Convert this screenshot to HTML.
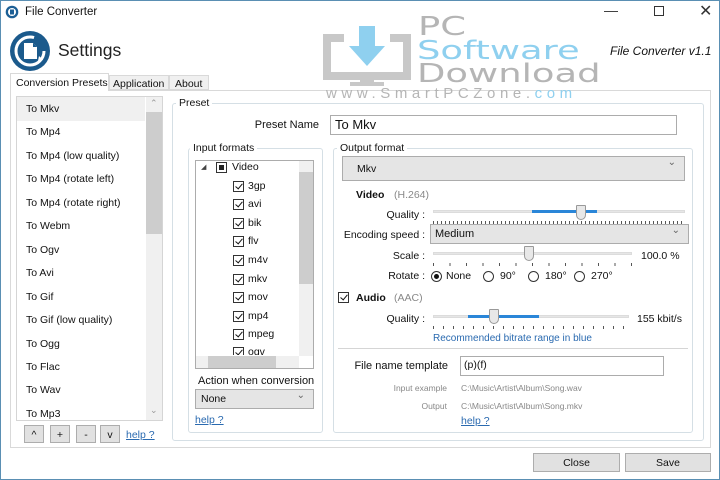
<!DOCTYPE html>
<html><head><meta charset="utf-8">
<style>
*{box-sizing:border-box;margin:0;padding:0}
body{width:720px;height:480px;overflow:hidden;background:#fff;font-family:"Liberation Sans",sans-serif;font-size:10.5px;color:#111;position:relative}
.a{position:absolute;white-space:nowrap}
.r{text-align:right}
.box{position:absolute;border:1px solid #d5dfe5;border-radius:3px}
.cb{position:absolute;width:11px;height:11px;border:1px solid #333;background:#fff}
.cb:after{content:"";position:absolute;left:3px;top:0px;width:3px;height:6px;border:solid #111;border-width:0 1.6px 1.6px 0;transform:rotate(40deg)}
.combo{position:absolute;background:#e5e5e5;border:1px solid #acacac}
.combo:after{content:"⌄";position:absolute;right:8px;top:0px;font-size:10px;color:#666}
.btn{position:absolute;background:#e1e1e1;border:1px solid #adadad;text-align:center}
.link{color:#2a6ab0;text-decoration:underline}
.track{position:absolute;height:3px;background:#e6e6e6;border:1px solid #dcdcdc}
.blue{position:absolute;height:3px;background:#2a86d8}
.thumb{position:absolute;width:10px;height:15px;background:#e8e8e8;border:1px solid #999;border-radius:1px 1px 5px 5px}
.ticks{position:absolute;height:3px}
.rad{position:absolute;width:11px;height:11px;border:1px solid #333;border-radius:50%;background:#fff}
.grey{color:#888}
.input{position:absolute;border:1px solid #acacac;background:#fff}
.wm{position:absolute;white-space:nowrap;font-family:"DejaVu Sans",sans-serif;font-size:26px;line-height:24px;transform-origin:0 0;transform:scaleX(1.42)}
</style></head><body>
<div class="a" style="left:0;top:0;width:720px;height:480px;border:1px solid #5a8fb3"></div>
<svg class="a" style="left:5px;top:5px" width="14" height="14" viewBox="0 0 14 14"><circle cx="7" cy="7" r="6.3" fill="#1c5f95"/><circle cx="7" cy="7" r="4" fill="#fff"/><rect x="5" y="4.5" width="4" height="5" fill="#1c5f95"/></svg>
<div class="a" style="left:25px;top:6px;font-size:11.5px">File Converter</div>
<div class="a" style="left:604px;top:2px;font-size:14px;color:#333">&#8212;</div>
<div class="a" style="left:654px;top:6px;width:10px;height:10px;border:1px solid #333"></div>
<div class="a" style="left:699px;top:1px;font-size:16px;color:#333">&#10005;</div>
<svg class="a" style="left:9px;top:30px" width="42" height="42" viewBox="0 0 42 42"><circle cx="21" cy="21" r="20" fill="#1b5a8c"/><circle cx="21" cy="21" r="14" fill="none" stroke="#fff" stroke-width="3" stroke-dasharray="70 18"/><path d="M15 13h9l4 4v12h-13z" fill="#fff"/><path d="M24 13v4h4" fill="#1b5a8c"/><path d="M30 26l4 4-5 1z" fill="#fff"/></svg>
<div class="a" style="left:58px;top:40px;font-size:17.5px;color:#222">Settings</div>
<div class="a" style="left:10px;top:90px;width:701px;height:358px;border:1px solid #d9d9d9;background:#fff"></div>
<div class="a" style="left:10px;top:73px;width:99px;height:18px;border:1px solid #d9d9d9;border-bottom:none;background:#fff;padding:3px 0 0 5px">Conversion Presets</div>
<div class="a" style="left:109px;top:75px;width:60px;height:15px;border:1px solid #d9d9d9;background:#f0f0f0;padding:2px 0 0 3px">Application</div>
<div class="a" style="left:169px;top:75px;width:40px;height:15px;border:1px solid #d9d9d9;background:#f0f0f0;padding:2px 0 0 5px">About</div>
<svg class="a" style="left:322px;top:26px" width="92" height="60" viewBox="0 0 92 60"><rect x="5" y="12" width="80" height="38" fill="none" stroke="#c8c8c8" stroke-width="8"/><rect x="22" y="4" width="46" height="40" fill="#fff"/><rect x="37" y="0" width="16" height="22" fill="#8fd0ef"/><path d="M27 20h36l-18 20z" fill="#8fd0ef"/><rect x="38" y="50" width="14" height="6" fill="#c8c8c8"/><rect x="28" y="56" width="34" height="4" fill="#c8c8c8"/></svg>
<div class="wm" style="left:418px;top:15px;color:#b5b5b5">PC</div>
<div class="wm" style="left:417px;top:39px;color:#8fd0ef">Software</div>
<div class="wm" style="left:417px;top:62px;color:#b5b5b5">Download</div>
<div class="a" style="left:326px;top:85px;font-size:15px;letter-spacing:4.6px;color:#b5b5b5">www.SmartPCZone.<span style="color:#8fd0ef">com</span></div>
<div class="a" style="left:610px;top:44px;font-size:12px;font-style:italic">File Converter v1.1</div>
<div class="a" style="left:16px;top:96px;width:147px;height:325px;border:1px solid #d5d5d5;background:#fff"></div>
<div class="a" style="left:17px;top:97px;width:128px;height:24px;background:#f0f0f0"></div>
<div class="a" style="left:146px;top:97px;width:16px;height:323px;background:#f0f0f0"></div>
<div class="a" style="left:146px;top:112px;width:16px;height:122px;background:#cdcdcd"></div>
<div class="a" style="left:150px;top:98px;color:#999;font-size:9px">&#8963;</div>
<div class="a" style="left:150px;top:405px;color:#999;font-size:9px">&#8964;</div>
<div class="a" style="left:26px;top:98px;line-height:23.45px">To Mkv<br>To Mp4<br>To Mp4 (low quality)<br>To Mp4 (rotate left)<br>To Mp4 (rotate right)<br>To Webm<br>To Ogv<br>To Avi<br>To Gif<br>To Gif (low quality)<br>To Ogg<br>To Flac<br>To Wav<br>To Mp3</div>
<div class="btn" style="left:24px;top:425px;width:20px;height:18px;padding-top:3px">^</div>
<div class="btn" style="left:50px;top:425px;width:20px;height:18px;padding-top:3px">+</div>
<div class="btn" style="left:76px;top:425px;width:20px;height:18px;padding-top:3px">-</div>
<div class="btn" style="left:100px;top:425px;width:20px;height:18px;padding-top:3px">v</div>
<div class="a link" style="left:126px;top:429px">help ?</div>
<div class="box" style="left:172px;top:103px;width:532px;height:338px"></div>
<div class="a" style="left:176px;top:97px;background:#fff;padding:0 3px">Preset</div>
<div class="a r" style="left:240px;top:119px;width:79px;font-size:11px">Preset Name</div>
<div class="input" style="left:330px;top:115px;width:347px;height:20px;font-size:13px;padding:1px 4px">To Mkv</div>
<div class="box" style="left:188px;top:148px;width:135px;height:285px"></div>
<div class="a" style="left:190px;top:142px;background:#fff;padding:0 3px">Input formats</div>
<div class="a" style="left:195px;top:160px;width:119px;height:209px;border:1px solid #acacac"></div>
<div class="a" style="left:299px;top:161px;width:14px;height:195px;background:#f0f0f0"></div>
<div class="a" style="left:299px;top:172px;width:14px;height:112px;background:#cdcdcd"></div>
<div class="a" style="left:196px;top:356px;width:103px;height:12px;background:#f0f0f0"></div>
<div class="a" style="left:208px;top:356px;width:68px;height:12px;background:#cdcdcd"></div>
<div class="a" style="left:201px;top:163px;font-size:7px;color:#444">&#9698;</div>
<div class="a" style="left:216px;top:162px;width:11px;height:11px;border:1px solid #333"><div style="margin:2px;width:5px;height:5px;background:#222"></div></div>
<div class="a" style="left:232px;top:161px">Video</div>
<div class="cb" style="left:233px;top:181px"></div><div class="a" style="left:248px;top:180px">3gp</div>
<div class="cb" style="left:233px;top:199px"></div><div class="a" style="left:248px;top:198px">avi</div>
<div class="cb" style="left:233px;top:218px"></div><div class="a" style="left:248px;top:217px">bik</div>
<div class="cb" style="left:233px;top:236px"></div><div class="a" style="left:248px;top:235px">flv</div>
<div class="cb" style="left:233px;top:255px"></div><div class="a" style="left:248px;top:254px">m4v</div>
<div class="cb" style="left:233px;top:274px"></div><div class="a" style="left:248px;top:273px">mkv</div>
<div class="cb" style="left:233px;top:292px"></div><div class="a" style="left:248px;top:291px">mov</div>
<div class="cb" style="left:233px;top:311px"></div><div class="a" style="left:248px;top:310px">mp4</div>
<div class="cb" style="left:233px;top:329px"></div><div class="a" style="left:248px;top:328px">mpeg</div>
<div class="a" style="left:232px;top:347px;width:66px;height:8px;overflow:hidden"><div class="cb" style="left:1px;top:0"></div><div class="a" style="left:16px;top:-1px">ogv</div></div>
<div class="a" style="left:198px;top:375px;font-size:11px">Action when conversion</div>
<div class="combo" style="left:195px;top:389px;width:119px;height:20px;padding:3px 5px">None</div>
<div class="a link" style="left:195px;top:414px">help ?</div>
<div class="box" style="left:333px;top:148px;width:360px;height:285px"></div>
<div class="a" style="left:337px;top:142px;background:#fff;padding:0 3px">Output format</div>
<div class="combo" style="left:342px;top:156px;width:343px;height:25px;padding:6px 0 0 14px">Mkv</div>
<div class="a" style="left:356px;top:189px;font-weight:bold">Video</div>
<div class="a grey" style="left:394px;top:189px">(H.264)</div>
<div class="a r" style="left:340px;top:209px;width:85px">Quality :</div>
<div class="track" style="left:433px;top:210px;width:252px"></div>
<div class="blue" style="left:532px;top:210px;width:65px"></div>
<div class="thumb" style="left:576px;top:205px"></div>
<div class="ticks" style="left:433px;top:221px;width:252px;background:repeating-linear-gradient(90deg,#555 0 1px,transparent 1px 4px)"></div>
<div class="a r" style="left:340px;top:229px;width:85px">Encoding speed :</div>
<div class="combo" style="left:430px;top:224px;width:259px;height:20px;padding:3px 4px;font-size:11px">Medium</div>
<div class="a r" style="left:340px;top:250px;width:85px">Scale :</div>
<div class="track" style="left:433px;top:252px;width:199px"></div>
<div class="thumb" style="left:524px;top:246px"></div>
<div class="ticks" style="left:433px;top:263px;width:200px;background:repeating-linear-gradient(90deg,#555 0 1px,transparent 1px 16.5px)"></div>
<div class="a" style="left:641px;top:250px">100.0 %</div>
<div class="a r" style="left:340px;top:270px;width:85px">Rotate :</div>
<div class="rad" style="left:431px;top:271px"><div style="margin:2px;width:5px;height:5px;border-radius:50%;background:#111"></div></div>
<div class="a" style="left:446px;top:270px">None</div>
<div class="rad" style="left:483px;top:271px"></div><div class="a" style="left:500px;top:270px">90°</div>
<div class="rad" style="left:528px;top:271px"></div><div class="a" style="left:545px;top:270px">180°</div>
<div class="rad" style="left:574px;top:271px"></div><div class="a" style="left:591px;top:270px">270°</div>
<div class="cb" style="left:338px;top:292px"></div>
<div class="a" style="left:356px;top:292px;font-weight:bold">Audio</div>
<div class="a grey" style="left:394px;top:292px">(AAC)</div>
<div class="a r" style="left:340px;top:313px;width:85px">Quality :</div>
<div class="track" style="left:433px;top:315px;width:196px"></div>
<div class="blue" style="left:468px;top:315px;width:71px"></div>
<div class="thumb" style="left:489px;top:309px"></div>
<div class="ticks" style="left:433px;top:326px;width:196px;background:repeating-linear-gradient(90deg,#555 0 1px,transparent 1px 10px)"></div>
<div class="a" style="left:637px;top:313px">155 kbit/s</div>
<div class="a" style="left:433px;top:333px;color:#2a6ab0;font-size:10px">Recommended bitrate range in blue</div>
<div class="a" style="left:338px;top:348px;width:350px;height:1px;background:#d5d5d5"></div>
<div class="a r" style="left:340px;top:360px;width:108px;font-size:11px">File name template</div>
<div class="input" style="left:460px;top:356px;width:204px;height:20px;padding:2px 3px">(p)(f)</div>
<div class="a r grey" style="left:340px;top:383px;width:107px;font-size:8.5px">Input example</div>
<div class="a grey" style="left:461px;top:383px;font-size:8.5px">C:\Music\Artist\Album\Song.wav</div>
<div class="a r grey" style="left:340px;top:401px;width:107px;font-size:8.5px">Output</div>
<div class="a grey" style="left:461px;top:401px;font-size:8.5px">C:\Music\Artist\Album\Song.mkv</div>
<div class="a link" style="left:461px;top:415px">help ?</div>
<div class="btn" style="left:533px;top:453px;width:87px;height:19px;padding-top:3px">Close</div>
<div class="btn" style="left:625px;top:453px;width:86px;height:19px;padding-top:3px">Save</div>
</body></html>
